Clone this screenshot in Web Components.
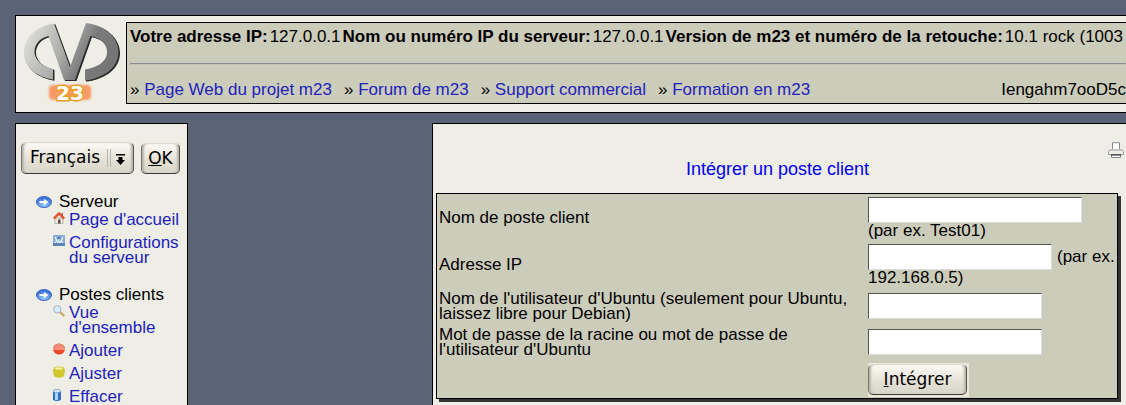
<!DOCTYPE html>
<html lang="fr">
<head>
<meta charset="utf-8">
<title>m23 – Intégrer un poste client</title>
<style>
  html, body { margin: 0; background: #5b6476; overflow: hidden; }
  body { font: 17px/15px "Liberation Sans", Arial, sans-serif; color: #000; }
</style>
</head>
<body>
<m23-app></m23-app>
<script>
const define = (name, html, setup) => customElements.define(name, class extends HTMLElement {
  connectedCallback() {
    if (this.shadowRoot) return;
    this.attachShadow({ mode: 'open' }).innerHTML =
      '<style>*{box-sizing:border-box} a{color:#2222bb;text-decoration:none}</style>' + html;
    if (setup) setup(this);
  }
});

const icons = {
  group: `<svg viewBox="0 0 16 12" width="16" height="12"><defs><radialGradient id="g" cy=".75" r=".6"><stop stop-color="#9bd0ff"/><stop offset="1" stop-color="#3b70d8"/></radialGradient></defs><ellipse cx="8" cy="6" rx="7.6" ry="5.6" fill="url(#g)" stroke="#2c5cc0" stroke-width=".8"/><path d="M3.500 5h4.500V3L12.500 6 8 9V7H3.500z" fill="#fff"/></svg>`,
  home: `<svg viewBox="0 0 12 12" width="12" height="12"><path d="M2 6h8v5.500H2z" fill="#eee8dd" stroke="#999" stroke-width=".6"/><path d="M5 7.500h2.500v4H5z" fill="#5b5148"/><path d="M.8 6.600 6 1.400l5.200 5.200" fill="none" stroke="#e2542b" stroke-width="2.400"/><path d="M8.500 1h1.500v3H8.500z" fill="#b55"/></svg>`,
  config: `<svg viewBox="0 0 12 12" width="12" height="12"><rect width="12" height="11" rx="1" fill="#86abd8"/><rect y="8" width="12" height="3" fill="#5c82b8"/><path d="M2 2l3 6M10 2 7 8M6 4v4M2 8l2-3M10 8 8 5" stroke="#e4f0fb" stroke-width="1.300"/><circle cx="6" cy="3" r="1.200" fill="#4a72ad"/></svg>`,
  view: `<svg viewBox="0 0 12 12" width="12" height="12"><path d="M7 7l4.300 4" stroke="#cf9f5a" stroke-width="2"/><circle cx="4.300" cy="4.300" r="3.700" fill="#d5ebf8" stroke="#9fb4c8"/></svg>`,
  add: `<svg viewBox="0 0 12 12" width="12" height="12"><ellipse cx="6" cy="6" rx="6" ry="5.500" fill="#ea4a2b"/><path d="M.6 5Q1.500 .8 6 .8T11.400 5z" fill="#ee8a78"/><path d="M0 6h12" stroke="#ffd3c8"/></svg>`,
  adjust: `<svg viewBox="0 0 12 12" width="12" height="12"><path d="M1 1.500Q6-.5 11 1.500 13 6 10.500 10.500 6 13 1.500 10.500-1 6 1 1.500z" fill="#cfc72c"/><ellipse cx="6" cy="2.500" rx="4" ry="1.300" fill="#f2efa5"/></svg>`,
  remove: `<svg viewBox="0 0 12 12" width="12" height="12"><path d="M0 2h8v9q-4 2-8 0z" fill="#2f6fc4"/><path d="M2 3h3v8H2z" fill="#a8d3f7"/><ellipse cx="4" cy="2" rx="4" ry="1.600" fill="#d3e6f7" stroke="#4f82bd" stroke-width=".5"/></svg>`,
  print: `<svg viewBox="0 0 16 16" width="16" height="16"><path d="M4.500 7V.7h7V7" fill="#fff" stroke="#8b8b8b"/><path d="M2 8h12l1.500 1.500v3h-15v-3z" fill="#eeeeea" stroke="#999"/><path d="M3.500 12.500h9v3h-9z" fill="#fff" stroke="#888"/><path d="M3 13h10" stroke="#222"/></svg>`
};

define('m23-icon', `<style>:host{display:block} svg{display:block}</style><span></span>`,
  el => { el.shadowRoot.querySelector('span').innerHTML = icons[el.getAttribute('name')] || ''; });

define('m23-logo', `
<style>:host{display:block;width:98px;height:82px;flex:none} svg{display:block}
text{font:bold 20px "DejaVu Sans",sans-serif}</style>
<svg viewBox="22 22 98 82" width="98" height="82" role="img" aria-label="m23">
  <defs>
    <linearGradient id="l" x1="0" x2="1" y1=".2" y2=".5"><stop stop-color="#e2e1dd"/><stop offset=".45" stop-color="#acacab"/><stop offset=".7" stop-color="#7b7b7b"/><stop offset="1" stop-color="#757575"/></linearGradient>
    <filter id="b" x="-30%" y="-30%" width="160%" height="160%"><feGaussianBlur stdDeviation="1"/></filter>
    <path id="m" d="M54 23.500C36 26 24 38 24 53C24 67 37 77 53 79.500V69C42 66 34.500 60 34.500 52C34.500 44 40 38 48.500 36L64 80H75L90.500 36C101 38 107 44 107 52C107 61 99 67 85 69.500V80.500C105 78 118.500 67 118.500 52C118.500 37 104 25 86 23L70 67Z"/>
  </defs>
  <use href="#m" x="1" y="1" fill="#292929"/><use href="#m" x="1.500" y="1" fill="#292929"/>
  <use href="#m" fill="url(#l)"/>
  <rect x="49" y="85" width="42" height="15" rx="4" fill="#f79a68" filter="url(#b)"/>
  <text x="70" y="100" text-anchor="middle" fill="#fff" stroke="#e9a02b" stroke-width="3" paint-order="stroke">23</text>
</svg>`);

define('m23-header', `
<style>
:host{display:flex;gap:6px;background:#eeeee6;border:1px solid #000;border-right:0;padding:6px 0 8px 6px;white-space:nowrap;line-height:20px}
.info{flex:1;min-width:0;overflow:hidden;background:#ccccbb;border:1px solid #000;border-right:0;padding:4px 0 3px 3px}
.status{display:flex;gap:2px}
hr{margin:16px 0 15px;border:1px solid;border-color:#8b8b96 #c4c4b6 #c4c4b6 #8b8b96}
nav{display:flex;gap:12px} .id{margin-left:auto}
</style>
<m23-logo></m23-logo>
<div class="info">
  <div class="status"><b>Votre adresse IP:</b> <span>127.0.0.1</span> <b>Nom ou numéro IP du serveur:</b> <span>127.0.0.1</span> <b>Version de m23 et numéro de la retouche:</b> <span>10.1 rock (1003</span></div>
  <hr>
  <nav><span>» <a href="#projet">Page Web du projet m23</a></span><span>» <a href="#forum">Forum de m23</a></span><span>» <a href="#support">Support commercial</a></span><span>» <a href="#formation">Formation en m23</a></span><span class="id">Iengahm7ooD5c</span></nav>
</div>`);

const bevel = `font:17px/22px "DejaVu Sans",sans-serif;color:#000;margin:0;border:1px solid;border-color:#dedbd0 #55534c #3c3a35 #77756c;border-radius:5px;background:linear-gradient(#fbfaf4,#e3e0d5 60%,#d8d5c9);box-shadow:inset 3px 0 2px -1px #b9b6aa,inset -3px 0 2px -1px #b9b6aa;`;

define('m23-button', `<style>:host{display:block;background:#eae6dc} button{${bevel}display:block;width:100%;height:31px;padding:0 0 2px}</style>
<button type="button"><u></u><span></span></button>`,
  el => {
    const t = el.getAttribute('label');
    el.shadowRoot.querySelector('u').textContent = t[0];
    el.shadowRoot.querySelector('span').textContent = t.slice(1);
  });

define('m23-language', `
<style>
:host{display:grid;grid-template-columns:113px 39px;gap:7px}
.pick{position:relative}
select{${bevel}appearance:none;width:100%;height:32px;padding:0 24px 3px 8px}
svg{position:absolute;right:6px;top:7px;pointer-events:none}
m23-button{align-self:end}
</style>
<div class="pick"><select aria-label="Langue"><option>Français</option></select>
<svg viewBox="0 0 22 18" width="22" height="18"><path d="M-.5 0v18M1.500 0v18M4.500 0v18" stroke="#b5b2a7"/><path d="M10 5h9v1.500h-9zM12.500 8h4v3h2.500l-4.500 5L10 11h2.500z" fill="#000"/></svg></div>
<m23-button label="OK"></m23-button>`);

define('m23-group', `
<style>:host{display:block} h2{display:flex;gap:7px;align-items:center;margin:0 0 3px;font:inherit}</style>
<h2><m23-icon name="group"></m23-icon><span></span></h2><slot></slot>`,
  el => { el.shadowRoot.querySelector('span').textContent = el.getAttribute('label'); });

define('m23-item', `
<style>:host{display:flex;gap:4px;margin:0 0 8px 17px} a{flex:1}</style>
<m23-icon></m23-icon><a href="#"><slot></slot></a>`,
  el => {
    const icon = el.shadowRoot.querySelector('m23-icon');
    icon.shadowRoot.querySelector('span').innerHTML = icons[el.getAttribute('icon')];
  });

define('m23-sidebar', `
<style>:host{display:block;background:#eeeee6;border:1px solid #000;border-bottom:0;padding:18px 6px 0 5px}
.menu{display:grid;gap:14px;padding:20px 0 0 15px}</style>
<m23-language></m23-language>
<div class="menu">
  <m23-group label="Serveur">
    <m23-item icon="home">Page d'accueil</m23-item>
    <m23-item icon="config">Configurations du serveur</m23-item>
  </m23-group>
  <m23-group label="Postes clients">
    <m23-item icon="view">Vue d'ensemble</m23-item>
    <m23-item icon="add">Ajouter</m23-item>
    <m23-item icon="adjust">Ajuster</m23-item>
    <m23-item icon="remove">Effacer</m23-item>
  </m23-group>
</div>`);

define('m23-form', `
<style>
:host{display:block}
form{display:grid;grid-template-columns:1fr 247px;row-gap:6px;align-items:center;background:#ccccbb;border:1px solid #000;box-shadow:3px 3px 0 #333;padding:3px 2px 1px}
.q{padding-right:12px}
input{width:174px;height:26px;margin:0;padding:2px;border:1px solid;border-color:#555 #ddd #ddd #555;background:#fff;font:inherit;vertical-align:top}
.name{width:214px}.ip{width:184px}
.low{align-self:center}
.act{grid-column:2;width:101px;padding:1px 2px 2px 0;background:#eae6dc}
.ex{display:flex;gap:5px;line-height:26px}
</style>
<form>
  <label class="q" for="n">Nom de poste client</label><div><input id="n" class="name"><div>(par ex. Test01)</div></div>
  <label class="q" for="i">Adresse IP</label><div><div class="ex"><input id="i" class="ip"><span>(par ex.</span></div><div>192.168.0.5)</div></div>
  <label class="q" for="u">Nom de l'utilisateur d'Ubuntu (seulement pour Ubuntu, laissez libre pour Debian)</label><input id="u" class="low">
  <label class="q" for="p">Mot de passe de la racine ou mot de passe de l'utilisateur d'Ubuntu</label><input id="p" type="password" class="low">
  <div class="act"><m23-button label="Intégrer"></m23-button></div>
</form>`);

define('m23-main', `
<style>:host{display:block;background:#eeeee6;border:1px solid #000;border-width:1px 0 0 1px;padding:18px 2px 0 3px}
.print{display:block;width:16px;margin-left:auto}
h1{margin:1px 5px 13px 0;font:18px/21px "Liberation Sans",sans-serif;color:#0000ee;text-align:center}
m23-form{margin-right:6px}</style>
<a class="print" href="#print" aria-label="Imprimer"><m23-icon name="print"></m23-icon></a>
<h1>Intégrer un poste client</h1>
<m23-form></m23-form>`);

define('m23-app', `
<style>:host{display:flex;flex-direction:column;gap:10px;min-height:100vh;box-sizing:border-box;padding:15px 0 0 15px}
.cols{flex:1;display:flex;gap:244px}
m23-sidebar{flex:0 0 173px}m23-main{flex:1}</style>
<m23-header></m23-header>
<div class="cols"><m23-sidebar></m23-sidebar><m23-main></m23-main></div>`);
</script>
</body>
</html>
